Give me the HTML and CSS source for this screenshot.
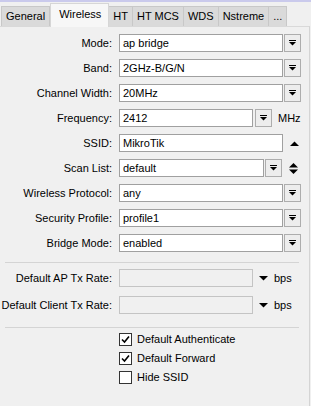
FILE: index.html
```html
<!doctype html>
<html>
  <head>
    <title>Wireless</title>
    <link rel="stylesheet" href="styles.css">
  </head>
  <body>
    <div class="window">
      <div class="tabs">
        <div class="tab">General</div>
        <div class="tab tab-active">Wireless</div>
        <div class="tab">HT</div>
        <div class="tab">HT MCS</div>
        <div class="tab">WDS</div>
        <div class="tab">Nstreme</div>
        <div class="tab">...</div>
      </div>

      <div class="panel">
        <div class="form">
          <div class="row">
            <label class="label">Mode:</label>
            <div class="field">
              <div class="input wide">ap bridge</div>
              <div class="drop"><svg width="7" height="6" viewBox="0 0 7 6"><rect x="0" y="0" width="7" height="1"/><polygon points="0,2 7,2 3.5,5.5"/></svg></div>
            </div>
          </div>
          <div class="row">
            <label class="label">Band:</label>
            <div class="field">
              <div class="input wide">2GHz-B/G/N</div>
              <div class="drop"><svg width="7" height="6" viewBox="0 0 7 6"><rect x="0" y="0" width="7" height="1"/><polygon points="0,2 7,2 3.5,5.5"/></svg></div>
            </div>
          </div>
          <div class="row">
            <label class="label">Channel Width:</label>
            <div class="field">
              <div class="input wide">20MHz</div>
              <div class="drop"><svg width="7" height="6" viewBox="0 0 7 6"><rect x="0" y="0" width="7" height="1"/><polygon points="0,2 7,2 3.5,5.5"/></svg></div>
            </div>
          </div>
          <div class="row">
            <label class="label">Frequency:</label>
            <div class="field">
              <div class="input short">2412</div>
              <div class="drop gap"><svg width="7" height="6" viewBox="0 0 7 6"><rect x="0" y="0" width="7" height="1"/><polygon points="0,2 7,2 3.5,5.5"/></svg></div>
              <span class="unit">MHz</span>
            </div>
          </div>
          <div class="row">
            <label class="label">SSID:</label>
            <div class="field">
              <div class="input wide">MikroTik</div>
              <div class="arrows"><svg width="9" height="5" viewBox="0 0 9 5"><polygon points="0,5 9,5 4.5,0.5"/></svg></div>
            </div>
          </div>
          <div class="row">
            <label class="label">Scan List:</label>
            <div class="field">
              <div class="input mid">default</div>
              <div class="drop"><svg width="7" height="6" viewBox="0 0 7 6"><rect x="0" y="0" width="7" height="1"/><polygon points="0,2 7,2 3.5,5.5"/></svg></div>
              <div class="arrows"><svg width="9" height="11" viewBox="0 0 9 11"><polygon points="0,4.5 9,4.5 4.5,0"/><polygon points="0,6.5 9,6.5 4.5,11"/></svg></div>
            </div>
          </div>
          <div class="row">
            <label class="label">Wireless Protocol:</label>
            <div class="field">
              <div class="input wide">any</div>
              <div class="drop"><svg width="7" height="6" viewBox="0 0 7 6"><rect x="0" y="0" width="7" height="1"/><polygon points="0,2 7,2 3.5,5.5"/></svg></div>
            </div>
          </div>
          <div class="row">
            <label class="label">Security Profile:</label>
            <div class="field">
              <div class="input wide">profile1</div>
              <div class="drop"><svg width="7" height="6" viewBox="0 0 7 6"><rect x="0" y="0" width="7" height="1"/><polygon points="0,2 7,2 3.5,5.5"/></svg></div>
            </div>
          </div>
          <div class="row">
            <label class="label">Bridge Mode:</label>
            <div class="field">
              <div class="input wide">enabled</div>
              <div class="drop"><svg width="7" height="6" viewBox="0 0 7 6"><rect x="0" y="0" width="7" height="1"/><polygon points="0,2 7,2 3.5,5.5"/></svg></div>
            </div>
          </div>
        </div>

        <div class="separator"></div>

        <div class="form rates">
          <div class="row">
            <label class="label">Default AP Tx Rate:</label>
            <div class="field">
              <div class="input short disabled"></div>
              <div class="caret"><svg width="9" height="5" viewBox="0 0 9 5"><polygon points="0,0 9,0 4.5,4.5"/></svg></div>
              <span class="unit">bps</span>
            </div>
          </div>
          <div class="row">
            <label class="label">Default Client Tx Rate:</label>
            <div class="field">
              <div class="input short disabled"></div>
              <div class="caret"><svg width="9" height="5" viewBox="0 0 9 5"><polygon points="0,0 9,0 4.5,4.5"/></svg></div>
              <span class="unit">bps</span>
            </div>
          </div>
        </div>

        <div class="separator"></div>

        <div class="checks">
          <div class="check">
            <span class="box"><svg width="9" height="9" viewBox="0 0 9 9"><path d="M1 4.5 L3.5 7 L8 1.5" fill="none" stroke="#000" stroke-width="1.6"/></svg></span>
            <span>Default Authenticate</span>
          </div>
          <div class="check">
            <span class="box"><svg width="9" height="9" viewBox="0 0 9 9"><path d="M1 4.5 L3.5 7 L8 1.5" fill="none" stroke="#000" stroke-width="1.6"/></svg></span>
            <span>Default Forward</span>
          </div>
          <div class="check">
            <span class="box"></span>
            <span>Hide SSID</span>
          </div>
        </div>
      </div>
    </div>
  </body>
</html>
```

FILE: styles.css
```css
* { margin: 0; padding: 0; box-sizing: border-box; }
html, body {
  width: 100%;
  height: 100%;
  overflow: hidden;
  background: #f0f0f0;
  font-family: "Liberation Sans", Arial, sans-serif;
  font-size: 11px;
  color: #000;
}
.window {
  height: 100%;
  display: flex;
  flex-direction: column;
  border-top: 2px solid #cacaec;
}
.tabs {
  display: flex;
  align-items: flex-end;
  height: 24px;
  padding-left: 1px;
}
.tab {
  height: 20px;
  line-height: 19px;
  padding: 0 4px;
  background: #dadada;
  border: 1px solid #c8c8c8;
  border-left: none;
  border-bottom: none;
}
.tab:first-child { border-left: 1px solid #c8c8c8; }
.tab-active {
  position: relative;
  z-index: 1;
  height: 24px;
  line-height: 20px;
  margin-bottom: -1px;
  padding: 0 7px 0 8px;
  background: #f7f7f7;
  border-left: 1px solid #d6d6d6;
  border-color: #d6d6d6;
}
.panel {
  flex: 1;
  width: 310px;
  border-top: 1px solid #d9d9d9;
  border-right: 1px solid #d4d4d4;
  padding-top: 7px;
}
.form {
  display: flex;
  flex-direction: column;
  gap: 7px;
}
.row {
  display: flex;
  align-items: center;
  height: 18px;
}
.label {
  width: 113px;
  text-align: right;
  padding-right: 1px;
}
.field {
  display: flex;
  align-items: center;
  margin-left: 6px;
  height: 18px;
}
.input {
  height: 18px;
  line-height: 16px;
  padding-left: 3px;
  background: #fff;
  border: 1px solid #a0a0a0;
  white-space: nowrap;
  overflow: hidden;
}
.input.wide { width: 164px; }
.input.mid { width: 145px; }
.input.short { width: 134px; }
.input.disabled {
  background: #f0f0f0;
  border-color: #c4c4c4;
}
.drop {
  display: flex;
  align-items: center;
  justify-content: center;
  width: 17px;
  height: 18px;
  margin-left: 1px;
  background: #ededed;
  border: 1px solid #adadad;
}
.drop.gap { margin-left: 2px; }
.arrows {
  display: flex;
  align-items: center;
  margin-left: 7px;
}
.caret {
  display: flex;
  align-items: center;
  margin-left: 6px;
}
.unit { margin-left: 6px; }
.separator {
  height: 1px;
  margin: 10px 10px 0 5px;
  background: #d4d4d4;
}
.rates {
  padding-top: 6px;
  gap: 9px;
}
.rates + .separator { margin-top: 13px; }
.checks {
  display: flex;
  flex-direction: column;
  gap: 5px;
  padding: 4px 0 0 119px;
}
.check {
  display: flex;
  align-items: center;
  gap: 5px;
  height: 14px;
}
.box {
  display: flex;
  align-items: center;
  justify-content: center;
  width: 13px;
  height: 13px;
  background: #fff;
  border: 1px solid #333;
}
```
